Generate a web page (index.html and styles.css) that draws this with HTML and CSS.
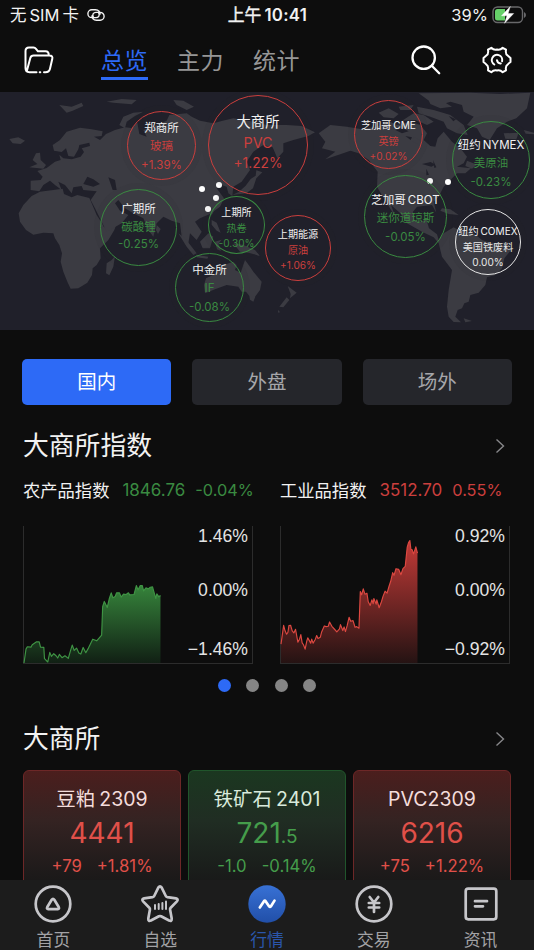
FILE: index.html
```html
<!DOCTYPE html>
<html lang="zh-CN">
<head>
    <meta charset="UTF-8">
    <title>行情</title>
    <link rel="stylesheet" href="styles.css">
</head>
<body>
    <div class="screen">
        <div class="status-bar">
            <div class="carrier">
                <span>无<span class="latin">SIM</span><span class="latin">卡</span></span>
                <svg class="link-icon" width="20" height="14" viewBox="0 0 20 14">
                    <path d="M7.600 8.900C5.600 7 7.500 4.400 10 4.400h4.200a3.900 3.900 0 0 1 0 7.800h-3.700C7.500 12.200 5.500 10 6 7.400M12.400 5.100c2 1.900.1 4.500-2.400 4.500H5.800a3.900 3.900 0 0 1 0-7.800h3.700c3 0 5 2.200 4.500 4.800" />
                </svg>
            </div>
            <div class="clock">上午<span>10:41</span></div>
            <div class="battery">
                <span>39%</span>
                <svg width="35" height="18" viewBox="0 0 35 18">
                    <rect x="1" y="1" width="29.5" height="15.5" rx="4.5" fill="none" stroke="#68686a" stroke-width="1.4" />
                    <path d="M32 6v6q2-1 2-3t-2-3z" fill="#68686a" />
                    <path d="M5.500 3H13v11.500H5.500A2.500 2.500 0 0 1 3 12V5.500A2.500 2.500 0 0 1 5.500 3z" fill="#65cf68" />
                    <path d="M18.300.500L9.500 9.800h5.500l-2.500 7.500L21.700 7.500h-5.600z" fill="#fff" stroke="#fff" stroke-width=".4" />
                </svg>
            </div>
        </div>

        <div class="header">
            <svg class="folder" width="30" height="28" viewBox="0 0 30 28">
                <path d="M12.500 26.200H5.500Q1.500 26.200 1.500 22V5Q1.500 1.500 5 1.500h4.500q1.500 0 2.500 1.300l2 2.500h7.500q3.300 0 3.300 4M3 24.500L6.300 12q.7-2.500 3.200-2.500h16q3.500 0 2.800 3.200l-2.300 10q-.8 3.500-4.500 3.500H20M15.700 26.200h.6" />
            </svg>
            <div class="header-tabs">
                <a class="header-tab active">总览</a>
                <a class="header-tab">主力</a>
                <a class="header-tab">统计</a>
            </div>
            <svg class="search" width="30" height="30" viewBox="0 0 30 30">
                <circle cx="12.700" cy="12.700" r="11.200" />
                <path d="M20.800 20.800l7.400 7.400" />
            </svg>
            <svg class="settings" width="30" height="28" viewBox="0 0 30 28">
                <path d="M9.300 1.800Q11.800 4.300 15 3.500q3.200.8 5.700-1.700l3.300 1.900q-.8 4.500 1.800 6 .6.700 2.700 2.300v4q-2.100 1.600-2.700 2.300-2.600 1.500-1.800 6l-3.300 1.900q-2.500-2.500-5.700-1.700-3.200-.8-5.700 1.700L6 24.300q.8-4.500-1.800-6-.6-.7-2.700-2.300v-4q2.100-1.600 2.700-2.300 2.600-1.500 1.800-6z" />
                <path d="M12.300 18.500a5.200 5.200 0 1 1 7.800-3.300M15 14.200q.5 3.500 3.800 3.200" />
            </svg>
        </div>

        <div class="map">
            <svg class="world" viewBox="0 6 1602 714" preserveAspectRatio="none">
                <!-- Africa -->
                <path d="M95 318L120 305 160 300 188 296 192 312 215 322 232 315 268 324 275 340 290 375 305 398 312 412 348 406 343 420 325 450 300 475 302 505 290 525 278 535 276 555 262 578 235 595 212 596 202 575 190 545 182 515 186 490 178 465 165 445 160 430 130 428 100 434 78 420 60 395 56 370 70 345z" />
                <path d="M345 498L340 530 328 556 318 550 320 520 335 510z" />
                <!-- Europe and Asia -->
                <path d="M92 300V272L122 270 128 260 112 243 140 234 165 215 182 210 178 194 190 205 215 208 242 200 252 186 245 175 270 168 268 158 238 165 235 178 222 200 205 198 198 175 185 186 162 182 158 165 180 150 200 125 240 113 275 118 308 124 305 138 282 140 300 150 318 132 345 120 375 112 395 114 412 98 418 132 440 140 430 120 470 105 500 92 508 75 560 70 575 80 600 92 640 100 668 92 700 85 760 95 801 105 860 105 905 108 945 127 925 138 880 150 850 160 850 185 832 205 818 172 790 165 760 185 740 215 750 240 725 275 700 290 697 318 685 310 680 290 665 285 650 295 672 325 660 350 630 372 600 385 585 395 605 425 590 450 570 430 565 460 580 490 560 465 545 440 540 400 515 392 490 380 470 400 460 440 445 420 430 385 400 370 375 355 355 330 345 340 360 362 385 375 365 400 320 425 305 395 285 355 272 330 290 304 250 300 245 288 220 292 215 310 195 285 175 275 185 300 165 285 150 272 130 285 118 304z" />
                <path d="M88 232L112 222 98 210 108 190 120 188 122 210 138 225 130 236zM28 147L55 142 75 152 62 162 38 160zM178 45L215 50 245 38 250 48 218 62 200 68zM320 35L365 27 410 30 395 43 340 38zM358 105L370 80 400 68 430 65 405 78 380 95 375 115zM520 30L550 32 582 50 560 60 530 45z" />
                <path d="M250 282L262 260 280 268 300 282 280 290zM325 262L345 270 350 300 338 300z" class="water" />
                <!-- South-east Asia and Oceania -->
                <path d="M470 405l12 12-8 15-6-12zM535 430L555 445 575 470 590 490 580 495 560 470zM588 494L625 500 622 506 590 502zM600 455L625 430 640 440 630 475 608 475zM645 455l20-6-10 12 8 22-12-5zM635 390l15 8 12 30-12-6-15-18zM700 460L730 465 765 480 780 498 745 488 720 485zM632 365l6-10 4 8-8 14zM697 315l20-10 20-18 15-20 15-10 2-16 18 6-18 18-10 30-20 15z" />
                <path d="M615 610L612 585 618 565 650 550 660 535 680 522 700 515 710 525 705 540 722 548 735 510 750 530 760 545 785 575 780 600 765 620 748 618 738 605 725 605 715 590 680 585 645 598zM748 618l18 2-6 15-10-6z" />
                <path d="M863 588L890 608 870 625 872 612zM860 622L868 630 850 652 838 650zM835 660l4 5-2 5-3-5z" />
                <!-- Americas -->
                <g transform="translate(801 0)">
                    <path d="M155 130L190 105 240 110 280 117 330 110 370 95 390 105 430 95 460 105 480 130 470 150 490 168 505 170 512 145 530 125 555 155 580 175 600 200 590 220 570 230 612 235 595 250 570 250 545 275 530 290 515 320 500 335 508 368 495 345 450 350 438 365 442 390 460 395 478 388 486 415 510 433 515 450 530 430 560 412 570 418 620 430 645 450 660 455 715 465 732 480 712 505 705 535 685 555 660 562 655 585 635 608 610 615 605 635 592 640 585 655 572 660 565 680 582 697 560 696 545 680 540 650 545 600 555 540 525 500 515 460 500 442 465 425 420 400 400 370 372 345 385 380 350 325 330 290 332 245 305 210 275 190 250 182 222 192 175 208 205 185 165 175 175 155z" />
                    <path d="M455 10L610 8 700 12 790 8 780 55 748 85 720 95 690 115 668 150 645 140 630 115 600 105 620 80 590 65 585 45 550 35 520 45 490 35zM335 68L365 55 395 72 380 85 350 82zM395 50L440 45 430 60 400 60zM405 92L440 70 470 75 500 95 480 105 445 90zM450 50L500 60 550 75 590 105 602 135 570 130 540 115 530 95 490 80 455 70zM480 20L530 35 555 50 520 55 490 42zM710 130L755 128 748 148 715 146zM525 355L550 358 575 375 545 372 520 362zM600 212l30 12-15 12-20-8zM590 685l25 8-20 4z" />
                    <path d="M770 120l31 8v5l-25-2zM440 140l25 14-5 12-25-12z" />
                    <path d="M385 120l22-6 18 10-20 6zM415 138l20 4-4 8zM545 78l22 10-8 6zM498 210l10 22-6 2zM465 222l26-6 14 8-12 6zM478 236l8 18-8 2z" class="water" />
                </g>
            </svg>

            <i class="pin pin-1"></i>
            <i class="pin pin-2"></i>
            <i class="pin pin-3"></i>
            <i class="pin pin-4"></i>
            <i class="pin pin-5"></i>
            <i class="pin pin-6"></i>

            <div class="bubble md up czce"><b>郑商所</b><span>玻璃</span><span>+1.39%</span></div>
            <div class="bubble lg up dce"><b>大商所</b><span>PVC</span><span>+1.22%</span></div>
            <div class="bubble md down gfex"><b>广期所</b><span>碳酸锂</span><span>-0.25%</span></div>
            <div class="bubble sm down shfe"><b>上期所</b><span>热卷</span><span>-0.30%</span></div>
            <div class="bubble md down cffex"><b>中金所</b><span>IF</span><span>-0.08%</span></div>
            <div class="bubble sm up ine"><b>上期能源</b><span>原油</span><span>+1.06%</span></div>
            <div class="bubble sm up cme"><b>芝加哥<em>CME</em></b><span>英镑</span><span>+0.02%</span></div>
            <div class="bubble md down cbot"><b>芝加哥<em>CBOT</em></b><span>迷你道琼斯</span><span>-0.05%</span></div>
            <div class="bubble md down nymex"><b>纽约<em>NYMEX</em></b><span>美原油</span><span>-0.23%</span></div>
            <div class="bubble sm flat comex"><b>纽约<em>COMEX</em></b><span>美国铁废料</span><span>0.00%</span></div>
        </div>

        <div class="content">
            <div class="market-tabs">
                <a class="market-tab active">国内</a>
                <a class="market-tab">外盘</a>
                <a class="market-tab">场外</a>
            </div>

            <div class="section-title">
                <h2>大商所指数</h2>
                <svg width="10" height="16" viewBox="0 0 10 16"><path d="M1.500 1.500L8.500 8l-7 6.500" /></svg>
            </div>

            <div class="indexes">
                <div class="index">
                    <div class="index-head down"><b>农产品指数</b><span>1846.76</span><span>-0.04%</span></div>
                    <div class="chart">
                        <svg class="plot" viewBox="70 46 690 414" preserveAspectRatio="none">
                            <defs>
                                <linearGradient id="fillDown" x1="0" y1="225" x2="0" y2="460" gradientUnits="userSpaceOnUse">
                                    <stop offset="0" stop-color="#36843b" />
                                    <stop offset="1" stop-color="#112014" />
                                </linearGradient>
                            </defs>
                            <path fill="url(#fillDown)" d="M70 460L76 418 80 411 91 412 95 405 108 396 116 396 120 412 130 413 132 447 142 455 148 428 153 440 160 432 167 438 172 445 177 434 185 444 194 438 204 446 211 422 216 406 222 422 229 415 236 430 242 433 249 413 257 429 265 415 278 388 290 393 305 376 308 290 313 274 322 292 328 266 334 248 339 263 346 259 350 248 359 248 364 261 371 252 379 253 386 248 390 254 403 253 410 226 415 239 422 226 428 226 432 242 439 233 446 236 452 231 459 230 464 248 469 265 472 251 478 260 483 256V460z" />
                            <path class="line" stroke="#3f9444" d="M70 460L76 418 80 411 91 412 95 405 108 396 116 396 120 412 130 413 132 447 142 457 148 428 153 440 160 432 167 438 172 445 177 434 185 444 194 438 204 446 211 422 216 406 222 422 229 415 236 430 242 433 249 413 257 429 265 415 278 388 290 393 305 376 308 290 313 274 322 292 328 266 334 248 339 263 346 259 350 248 359 248 364 261 371 252 379 253 386 248 390 254 403 253 410 226 415 239 422 226 428 226 432 242 439 233 446 236 452 231 459 230 464 248 469 265 472 251 478 260 483 256" />
                        </svg>
                        <div class="axis"><span>1.46%</span><span>0.00%</span><span>−1.46%</span></div>
                    </div>
                </div>
                <div class="index">
                    <div class="index-head up"><b>工业品指数</b><span>3512.70</span><span>0.55%</span></div>
                    <div class="chart">
                        <svg class="plot" viewBox="41 46 690 414" preserveAspectRatio="none">
                            <defs>
                                <linearGradient id="fillUp" x1="0" y1="90" x2="0" y2="460" gradientUnits="userSpaceOnUse">
                                    <stop offset="0" stop-color="#c33a37" />
                                    <stop offset="1" stop-color="#251313" />
                                </linearGradient>
                            </defs>
                            <path fill="url(#fillUp)" d="M41 403L44 382 49 346 53 362 58 373 62 367 65 347 70 346 75 363 80 369 85 358 92 397 97 388 101 374 105 399 109 405 114 418 119 394 122 384 131 400 134 388 138 400 145 388 149 377 153 386 160 382 164 366 172 348 178 350 184 349 188 336 195 349 203 358 210 366 218 357 221 344 228 362 232 351 236 365 241 348 247 322 252 334 259 332 265 352 270 350 277 355 281 244 285 254 290 236 295 252 301 249 305 275 311 286 316 269 320 281 322 265 329 282 331 269 338 293 345 275 350 258 356 243 362 249 368 228 373 213 379 187 383 195 389 175 397 177 404 193 410 175 417 168 423 110 427 96 431 90 434 116 438 118 442 130 445 122 449 109 454 128V460H41z" />
                            <path class="line" stroke="#dc4841" d="M41 403L44 382 49 346 53 362 58 373 62 367 65 347 70 346 75 363 80 369 85 358 92 397 97 388 101 374 105 399 109 405 114 418 119 394 122 384 131 400 134 388 138 400 145 388 149 377 153 386 160 382 164 366 172 348 178 350 184 349 188 336 195 349 203 358 210 366 218 357 221 344 228 362 232 351 236 365 241 348 247 322 252 334 259 332 265 352 270 350 277 355 281 244 285 254 290 236 295 252 301 249 305 275 311 286 316 269 320 281 322 265 329 282 331 269 338 293 345 275 350 258 356 243 362 249 368 228 373 213 379 187 383 195 389 175 397 177 404 193 410 175 417 168 423 110 427 96 431 90 434 116 438 118 442 130 445 122 449 109 454 128" />
                        </svg>
                        <div class="axis"><span>0.92%</span><span>0.00%</span><span>−0.92%</span></div>
                    </div>
                </div>
            </div>

            <div class="dots"><i class="active"></i><i></i><i></i><i></i></div>

            <div class="section-title second">
                <h2>大商所</h2>
                <svg width="10" height="16" viewBox="0 0 10 16"><path d="M1.500 1.500L8.500 8l-7 6.500" /></svg>
            </div>

            <div class="cards">
                <div class="card up">
                    <div class="card-name">豆粕<em>2309</em></div>
                    <div class="card-price">4441</div>
                    <div class="card-change"><span>+79</span><span>+1.81%</span></div>
                </div>
                <div class="card down">
                    <div class="card-name">铁矿石<em>2401</em></div>
                    <div class="card-price">721<small>.5</small></div>
                    <div class="card-change"><span>-1.0</span><span>-0.14%</span></div>
                </div>
                <div class="card up">
                    <div class="card-name">PVC2309</div>
                    <div class="card-price">6216</div>
                    <div class="card-change"><span>+75</span><span>+1.22%</span></div>
                </div>
            </div>
        </div>

        <div class="tab-bar">
            <a class="tab">
                <svg width="40" height="40" viewBox="0 0 40 40">
                    <circle cx="20" cy="20" r="17.300" />
                    <path d="M18.700 15.800q1.300-2 2.600 0l4.400 7.200q1 2-1 2.200h-9.400q-2-.2-1-2.200z" />
                </svg>
                <span>首页</span>
            </a>
            <a class="tab">
                <svg width="40" height="40" viewBox="0 0 40 40">
                    <path d="M18.300 3.600q1.700-2.400 3.400 0l4.100 8.400q.5 1 1.600 1.200l8.500 1.200q2.900.7 1 3l-6.200 6.300q-.8.900-.6 2l1.600 8.800q.2 3.200-2.600 2l-8-4.200q-1.100-.5-2.200 0l-8 4.200q-2.800 1.200-2.600-2l1.600-8.800q.2-1.100-.6-2l-6.200-6.300q-1.900-2.300 1-3l8.500-1.200q1.100-.2 1.600-1.200z" />
                    <path d="M15 21v4M18.700 20v5M22.400 19v6M26 17.500V25" stroke-width="2" />
                </svg>
                <span>自选</span>
            </a>
            <a class="tab active">
                <svg width="40" height="40" viewBox="0 0 40 40">
                    <defs>
                        <linearGradient id="tabFill" x1="0" y1="0" x2="0" y2="1">
                            <stop offset="0" stop-color="#3871d5" />
                            <stop offset="1" stop-color="#214fa8" />
                        </linearGradient>
                    </defs>
                    <circle class="disc" cx="20" cy="20" r="18.700" fill="url(#tabFill)" />
                    <path d="M12.800 23.500l4.200-6.300q.8-1 1.600 0l3.600 5.300q.8 1 1.600 0l3.700-5.900" stroke="#fff" />
                </svg>
                <span>行情</span>
            </a>
            <a class="tab">
                <svg width="40" height="40" viewBox="0 0 40 40">
                    <circle cx="20" cy="20" r="17.300" />
                    <path d="M15.700 13L20 18.500 24.300 13M20 18.500V28M14.800 19h10.400M14.800 23.500h10.400" />
                </svg>
                <span>交易</span>
            </a>
            <a class="tab">
                <svg width="40" height="40" viewBox="0 0 40 40">
                    <rect x="4.700" y="4.700" width="30.600" height="30.600" rx="2.500" />
                    <path d="M14 17.200h12M14 22.300h8" />
                </svg>
                <span>资讯</span>
            </a>
        </div>
    </div>
</body>
</html>
```

FILE: styles.css
```css
* {
    box-sizing: border-box;
}
body {
    margin: 0;
    background: #0d0d0d;
    color: #f2f2f2;
    font-family: Inter, "Noto Sans CJK SC", sans-serif;
}
b, em, i {
    font-weight: normal;
    font-style: normal;
}
.screen {
    width: 534px;
    height: 950px;
    display: flex;
    flex-direction: column;
    overflow: hidden;
}

/* status bar */
.status-bar {
    flex: none;
    height: 30px;
    display: grid;
    grid-template-columns: 1fr auto 1fr;
    align-items: center;
    padding: 0 7px 0 10px;
    font-size: 16.5px;
    line-height: 30px;
}
.carrier {
    display: flex;
    align-items: center;
    gap: 7px;
}
.latin {
    margin-left: 3px;
}
.link-icon {
    fill: none;
    stroke: #f2f2f2;
    stroke-width: 1.4;
}
.clock {
    margin-right: 2px;
    font-size: 16.8px;
    -webkit-text-stroke: 0.4px #f2f2f2;
}
.clock span {
    margin-left: 3px;
    font-weight: 600;
    letter-spacing: 0.3px;
    -webkit-text-stroke: 0;
}
.battery {
    display: flex;
    justify-content: flex-end;
    align-items: center;
    gap: 4px;
}

/* header */
.header {
    flex: none;
    height: 62px;
    display: flex;
    align-items: center;
    padding: 0 22px 2px 24px;
}
.header > svg {
    flex: none;
    fill: none;
    stroke: #fff;
    stroke-width: 2;
    stroke-linecap: round;
    stroke-linejoin: round;
}
.header .search {
    margin: 0 41px 0 auto;
    stroke-width: 2.3;
}
.header-tabs {
    display: flex;
    gap: 29px;
    margin-left: 47px;
}
.header-tab {
    height: 40px;
    line-height: 42px;
    font-size: 23px;
    letter-spacing: 0.5px;
    color: #969696;
    border-bottom: 3px solid transparent;
}
.header-tab.active {
    color: #2d6af6;
    border-bottom-color: #2d6af6;
}

/* world map */
.map {
    flex: none;
    position: relative;
    height: 238px;
    background: #20202a;
    overflow: hidden;
}
.world {
    display: block;
    width: 100%;
    height: 100%;
    fill: #3b3b42;
}
.world .water {
    fill: #20202a;
}
.pin {
    position: absolute;
    width: 6px;
    height: 6px;
    border-radius: 50%;
    background: #fff;
}
.pin-1 { left: 199px; top: 94px; }
.pin-2 { left: 216px; top: 90px; }
.pin-3 { left: 213px; top: 103px; }
.pin-4 { left: 205px; top: 114px; }
.pin-5 { left: 427px; top: 86px; }
.pin-6 { left: 445px; top: 87px; }

.bubble {
    position: absolute;
    display: flex;
    flex-direction: column;
    align-items: center;
    border: 1px solid;
    border-radius: 50%;
    white-space: nowrap;
    box-shadow: 0 0 0 6px rgba(26, 26, 32, 0.06);
}
.bubble b {
    color: #f2f2f2;
}
.bubble em {
    margin-left: 2px;
}
.bubble.lg { font-size: 14.3px; line-height: 21px; }
.bubble.md { font-size: 11.5px; line-height: 18.3px; }
.bubble.sm { font-size: 10.1px; line-height: 15.7px; }
.up { color: #cb3f3d; }
.down { color: #3a8a41; }
.flat { color: #e6e6e6; }
.czce { left: 127px; top: 19px; width: 69px; height: 69px; padding-top: 7px; }
.dce { left: 208px; top: 3px; width: 100px; height: 100px; padding-top: 15px; }
.dce span:last-child { font-size: 13.8px; }
.gfex { left: 100px; top: 97px; width: 77px; height: 77px; padding-top: 10px; }
.gfex span:last-child { line-height: 14.5px; }
.shfe { left: 208px; top: 104px; width: 57px; height: 58px; padding-top: 8px; }
.cffex { left: 175px; top: 161px; width: 69px; height: 69px; padding-top: 7px; }
.ine { left: 265px; top: 123px; width: 66px; height: 66px; padding-top: 11px; }
.cme { left: 354px; top: 8px; width: 69px; height: 69px; padding-top: 17px; }
.cbot { left: 364px; top: 83px; width: 83px; height: 83px; padding-top: 15px; }
.nymex { left: 452px; top: 29px; width: 78px; height: 78px; padding-top: 14px; }
.comex { left: 455px; top: 117px; width: 66px; height: 66px; padding-top: 14px; }

/* content */
.content {
    flex: 1;
    min-height: 0;
    padding: 29px 22px 0;
    overflow: hidden;
}
.market-tabs {
    display: grid;
    grid-template-columns: repeat(3, 1fr);
    gap: 21px;
}
.market-tab {
    height: 46px;
    line-height: 47px;
    border-radius: 5px;
    background: #25262b;
    color: #a6a6aa;
    font-size: 19.5px;
    text-align: center;
}
.market-tab.active {
    background: #2d6af6;
    color: #fff;
}
.section-title {
    display: flex;
    justify-content: space-between;
    align-items: center;
    height: 40px;
    margin-top: 21px;
    padding: 0 7px 0 1px;
}
.section-title h2 {
    margin: 0;
    font-size: 25.8px;
    line-height: 40px;
    font-weight: normal;
}
.section-title svg {
    fill: none;
    stroke: #87878a;
    stroke-width: 1.4;
}
.indexes {
    display: grid;
    grid-template-columns: 230px 230px;
    gap: 27px;
    margin: 9px 0 0 1px;
}
.index-head {
    display: flex;
    height: 30px;
    line-height: 31px;
    font-size: 17px;
    white-space: nowrap;
}
.index-head b {
    color: #f2f2f2;
    font-size: 17.3px;
}
.index-head span {
    margin-left: 13px;
}
.index-head span + span {
    margin-left: 10px;
    font-size: 16.3px;
}
.chart {
    position: relative;
    height: 138px;
    margin-top: 21px;
    border: 1px solid #2c2c2c;
    border-top: none;
}
.plot {
    display: block;
    width: 100%;
    height: 100%;
    overflow: visible;
}
.plot .line {
    fill: none;
    stroke-width: 3.5;
    stroke-linejoin: round;
}
.axis {
    position: absolute;
    top: 0;
    right: 4px;
    display: grid;
    grid-template-rows: 54px 59px 22px;
    justify-items: end;
    color: #e4e4e4;
    font: 17.6px/21px "Liberation Sans", Arial, sans-serif;
}
.dots {
    display: flex;
    justify-content: center;
    gap: 15.5px;
    margin-top: 15px;
}
.dots i {
    width: 13px;
    height: 13px;
    border-radius: 50%;
    background: #858585;
}
.dots i.active {
    background: #2d6af6;
}
.section-title.second {
    margin-top: 27px;
}

/* quote cards */
.cards {
    display: grid;
    grid-template-columns: repeat(3, 158px);
    gap: 7px;
    margin: 11px 0 0 1px;
}
.card {
    height: 130px;
    padding-top: 13px;
    border: 1.5px solid;
    border-radius: 6px;
    text-align: center;
}
.card.up {
    color: #e05049;
    border-color: #6d2727;
    background: linear-gradient(#4b1e1d, #342322 50px, #181818 115px);
}
.card.down {
    color: #459d4b;
    border-color: #20552b;
    background: linear-gradient(#1b3720, #202d23 50px, #181818 115px);
}
.card-name {
    height: 31px;
    line-height: 30px;
    font-size: 19.5px;
}
.card-name em {
    margin-left: 4px;
}
.card.up .card-name {
    color: #f4dddc;
}
.card.down .card-name {
    color: #d8eadb;
}
.card-price {
    height: 36px;
    line-height: 37px;
    font-size: 28px;
}
.card-price small {
    font-size: 19px;
}
.card-change {
    display: flex;
    justify-content: center;
    gap: 15px;
    line-height: 30px;
    font-size: 16.7px;
}

/* bottom tabs */
.tab-bar {
    flex: none;
    height: 70px;
    display: grid;
    grid-template-columns: repeat(5, 1fr);
    padding-top: 4px;
    background: #1c1c1c;
}
.tab {
    display: flex;
    flex-direction: column;
    align-items: center;
    color: #a2a2a5;
    font-size: 16.8px;
    line-height: 32px;
}
.tab svg {
    flex: none;
    fill: none;
    stroke: #c6c6ca;
    stroke-width: 2.7;
    stroke-linecap: round;
    stroke-linejoin: round;
}
.tab .disc {
    stroke: none;
}
.tab.active {
    color: #2a56ab;
}
```
